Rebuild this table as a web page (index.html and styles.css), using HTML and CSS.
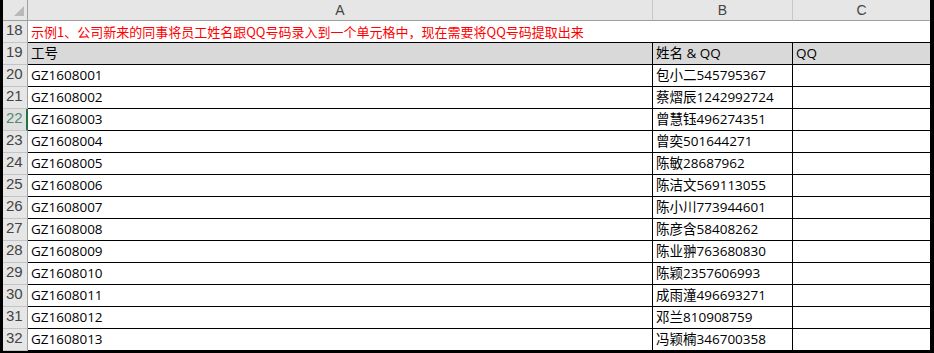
FILE: index.html
```html
<!DOCTYPE html>
<html lang="zh-CN">
<head>
<meta charset="utf-8">
<title>Sheet</title>
<link rel="stylesheet" href="styles.css">
</head>
<body>
<div class="sheet">
  <div class="corner"><svg width="24" height="20" viewBox="0 0 24 20"><polygon points="11,16 21,16 21,6" fill="#b9b9b9"/></svg></div>
  <div class="ch">A</div>
  <div class="ch">B</div>
  <div class="ch last">C</div>

  <div class="rh">18</div>
  <div class="title">示例1、公司新来的同事将员工姓名跟QQ号码录入到一个单元格中，现在需要将QQ号码提取出来</div>

  <div class="rh">19</div>
  <div class="cell head">工号</div>
  <div class="cell head">姓名 &amp; QQ</div>
  <div class="cell head last">QQ</div>

  <div class="rh">20</div><div class="cell">GZ1608001</div><div class="cell">包小二545795367</div><div class="cell last"></div>
  <div class="rh">21</div><div class="cell">GZ1608002</div><div class="cell">蔡熠辰1242992724</div><div class="cell last"></div>
  <div class="rh sel">22</div><div class="cell">GZ1608003</div><div class="cell">曾慧钰496274351</div><div class="cell last"></div>
  <div class="rh">23</div><div class="cell">GZ1608004</div><div class="cell">曾奕501644271</div><div class="cell last"></div>
  <div class="rh">24</div><div class="cell">GZ1608005</div><div class="cell">陈敏28687962</div><div class="cell last"></div>
  <div class="rh">25</div><div class="cell">GZ1608006</div><div class="cell">陈洁文569113055</div><div class="cell last"></div>
  <div class="rh">26</div><div class="cell">GZ1608007</div><div class="cell">陈小川773944601</div><div class="cell last"></div>
  <div class="rh">27</div><div class="cell">GZ1608008</div><div class="cell">陈彦含58408262</div><div class="cell last"></div>
  <div class="rh">28</div><div class="cell">GZ1608009</div><div class="cell">陈业翀763680830</div><div class="cell last"></div>
  <div class="rh">29</div><div class="cell">GZ1608010</div><div class="cell">陈颖2357606993</div><div class="cell last"></div>
  <div class="rh">30</div><div class="cell">GZ1608011</div><div class="cell">成雨潼496693271</div><div class="cell last"></div>
  <div class="rh">31</div><div class="cell">GZ1608012</div><div class="cell">邓兰810908759</div><div class="cell last"></div>
  <div class="rh">32</div><div class="cell">GZ1608013</div><div class="cell">冯颖楠346700358</div><div class="cell last"></div>
</div>
</body>
</html>
```
FILE: styles.css
```css
* { box-sizing: border-box; }
html, body { margin: 0; padding: 0; background: #ffffff; }
.sheet {
  width: 934px;
  height: 353px;
  display: grid;
  grid-template-columns: 25px 625px 140px 137px;
  grid-template-rows: 21px;
  grid-auto-rows: 22px;
  border-left: 3px solid #000;
  border-right: 4px solid #000;
  border-bottom: 2px solid #000;
  font-family: "Open Sans", "Noto Sans CJK SC", sans-serif;
  font-size: 13.5px;
  color: #000;
  overflow: hidden;
}
.corner {
  background: #e6e6e6;
  border-right: 1px solid #a0a0a0;
  border-bottom: 1px solid #9e9e9e;
}
.corner svg { display: block; }
.ch {
  background: #e6e6e6;
  border-right: 1px solid #c6c6c6;
  border-bottom: 1px solid #9e9e9e;
  color: #444;
  font-family: "Liberation Sans", sans-serif;
  font-size: 14px;
  text-align: center;
  line-height: 21px;
}
.ch.last { border-right: none; }
.rh {
  background: #e6e6e6;
  border-right: 1px solid #a0a0a0;
  border-bottom: 1px solid #c4c4c4;
  color: #444;
  font-family: "Liberation Sans", sans-serif;
  font-size: 15px;
  line-height: 24px;
  padding-left: 3px;
  display: flex;
  align-items: flex-end;
}
.rh.sel {
  color: #4f8a6e;
  background: #e0e0e0;
  border-right: 2px solid #217346;
}
.title {
  grid-column: span 3;
  color: #ff0000;
  border-bottom: 1px solid #000;
  line-height: 21px;
  padding-left: 3px;
  white-space: nowrap;
  font-family: "Noto Sans CJK SC", sans-serif;
  font-size: 13px;
}
.cell {
  border-right: 1px solid #000;
  border-bottom: 1px solid #000;
  line-height: 20px;
  padding-left: 3px;
  white-space: nowrap;
  overflow: hidden;
}
.cell.last { border-right: none; }
.head { background: #d9d9d9; }
```
